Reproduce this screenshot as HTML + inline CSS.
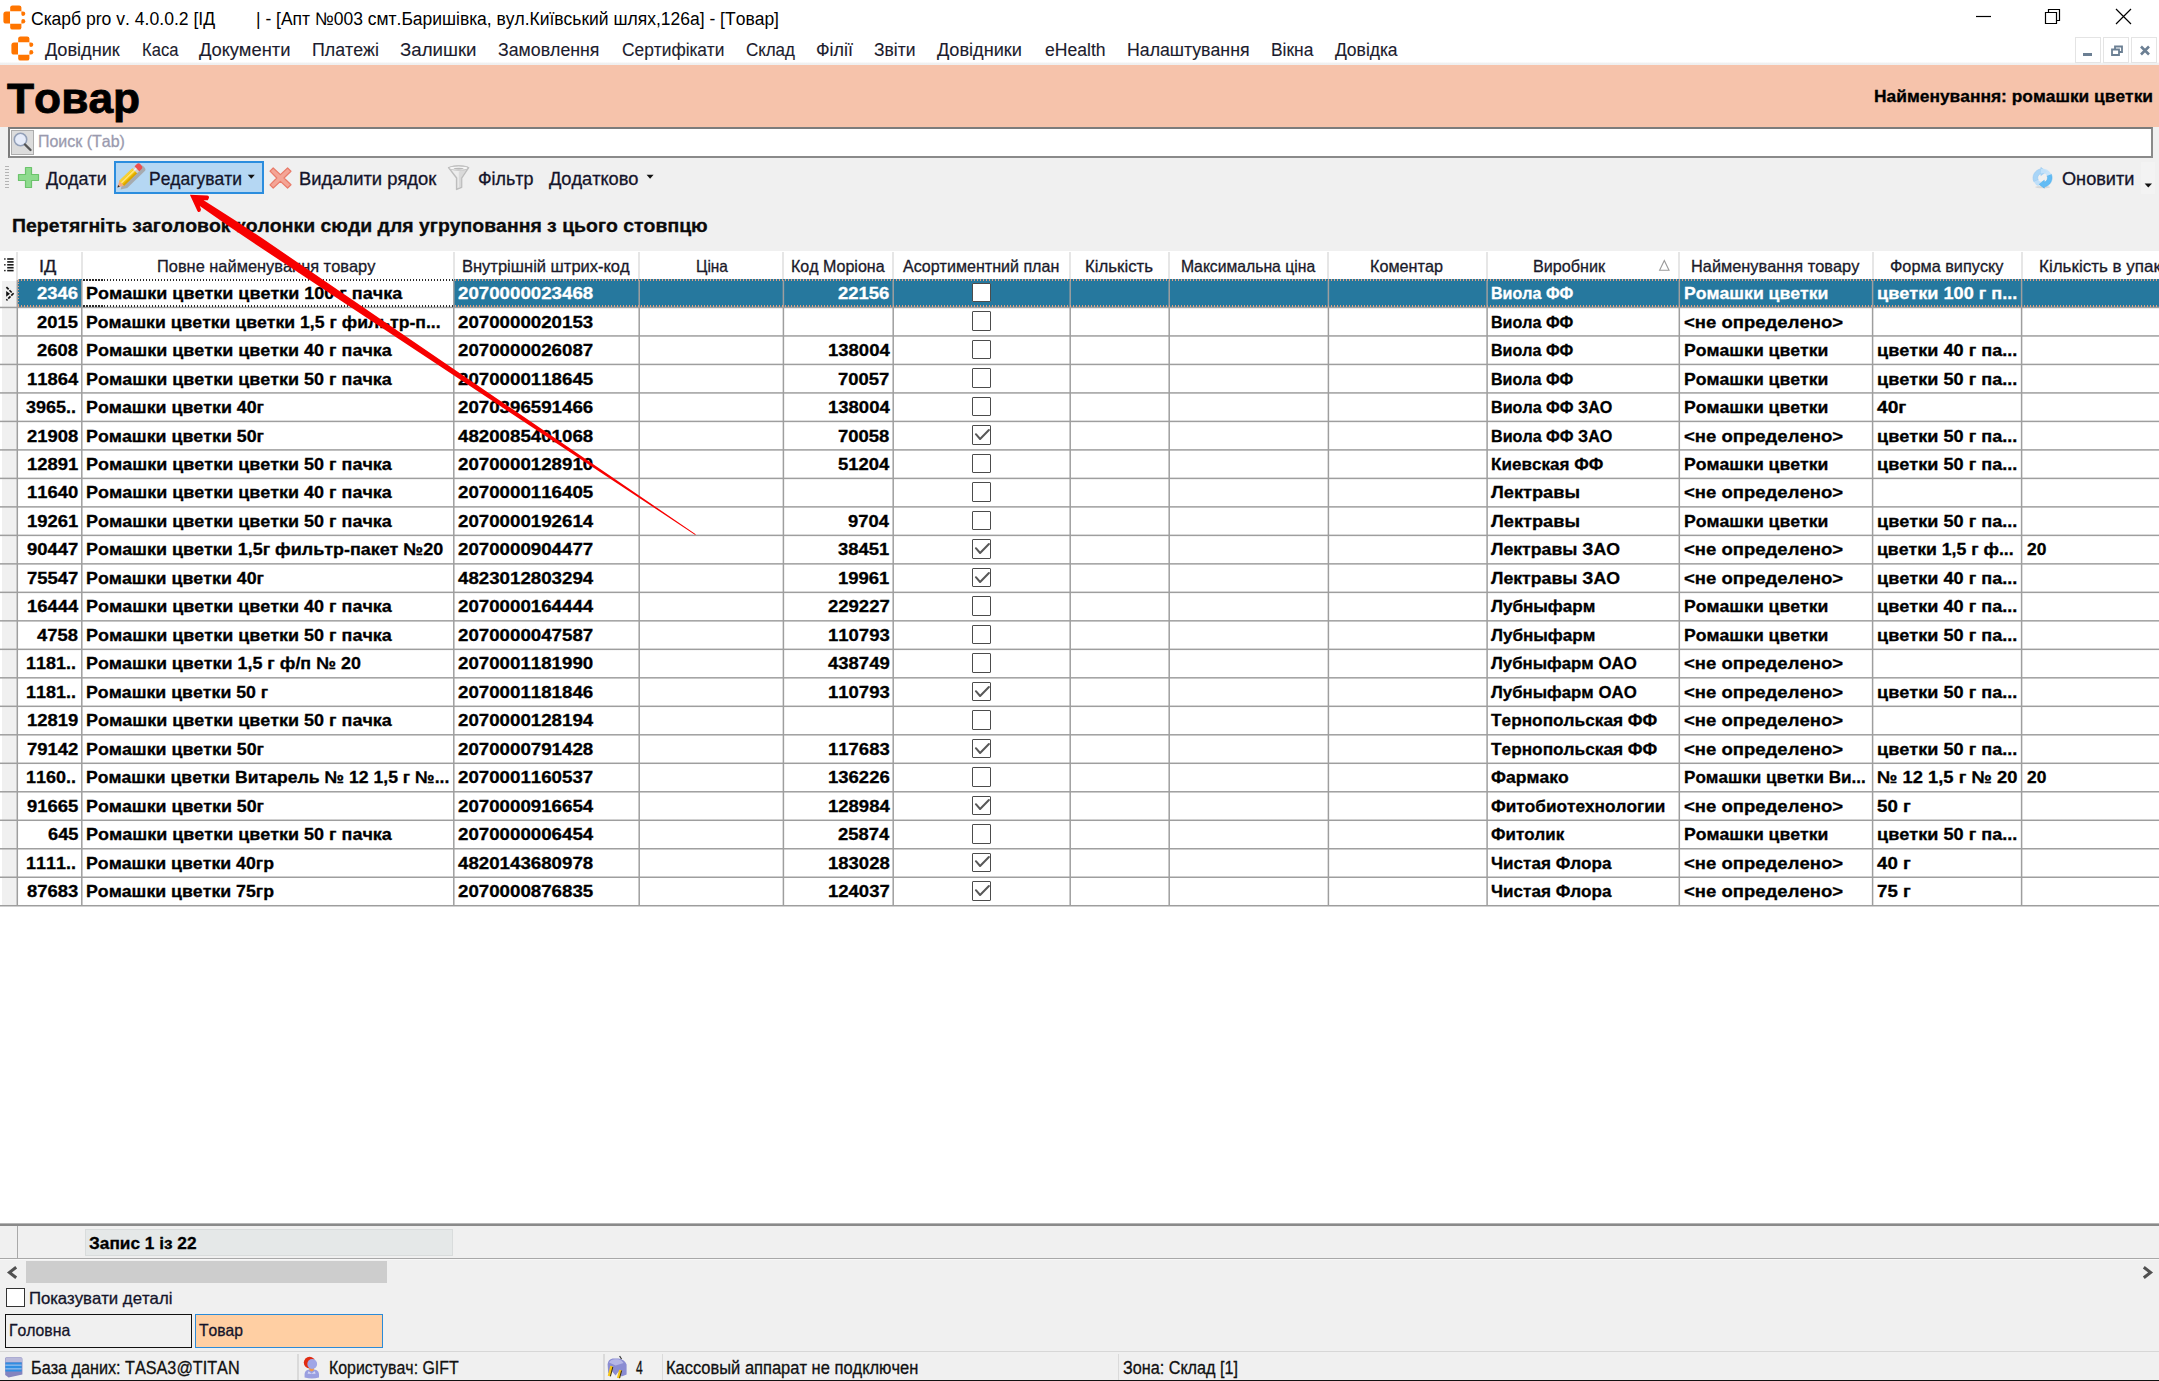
<!DOCTYPE html>
<html><head><meta charset="utf-8"><title>Скарб pro</title>
<style>
html,body{margin:0;padding:0;background:#fff;}
body{width:2159px;height:1381px;position:relative;overflow:hidden;font-family:"Liberation Sans",sans-serif;font-kerning:none;}
.t{position:absolute;white-space:nowrap;line-height:1;letter-spacing:0;-webkit-text-stroke:0.3px currentColor}
.r{position:absolute}
.a{position:absolute;overflow:visible}
</style></head><body>
<div class="r" style="left:0px;top:0px;width:2159px;height:65px;background:#fff;"></div>
<div class="r" style="left:0px;top:61.5px;width:2159px;height:3.5px;background:linear-gradient(#fff,#f0f0f0 40%,#efefef);"></div>
<div class="r" style="left:0px;top:65px;width:2159px;height:62px;background:#F6C3AB;"></div>
<div class="r" style="left:0px;top:127px;width:2159px;height:124px;background:#F0F0F0;"></div>
<div class="r" style="left:0px;top:251px;width:2159px;height:972px;background:#fff;"></div>
<div class="r" style="left:0px;top:1223px;width:2159px;height:158px;background:#F0F0F0;"></div>
<svg class="a" style="left:2.6px;top:4.9px" width="24" height="26" viewBox="0 0 24 26"><path fill="#FF7500" d="M7.2 2.6Q7.2 0.4 9.4 0.4H16.2Q18.4 0.4 18.4 2.6V6.2H7.2Z"/><path fill="#FF7500" d="M0.4 9.2Q0.4 6.6 3 6.6H7V18.6H3Q0.4 18.6 0.4 16Z"/><path fill="#FF7500" d="M7.2 18.8H18.4V22.4Q18.4 24.6 16.2 24.6H9.4Q7.2 24.6 7.2 22.4Z"/><path fill="#FF7500" d="M18.4 6.6H20Q22.3 6.6 22.3 8.8Q22.3 10.9 20 10.9Q18.4 10.9 18.4 9.3Z"/><path fill="#FF7500" d="M18.4 15.7Q18.4 14.1 20 14.1Q22.3 14.1 22.3 16.2Q22.3 18.4 20 18.4H18.4Z"/></svg>
<svg class="a" style="left:11.4px;top:36px" width="24" height="26" viewBox="0 0 24 26"><path fill="#FF7500" d="M7.2 2.6Q7.2 0.4 9.4 0.4H16.2Q18.4 0.4 18.4 2.6V6.2H7.2Z"/><path fill="#FF7500" d="M0.4 9.2Q0.4 6.6 3 6.6H7V18.6H3Q0.4 18.6 0.4 16Z"/><path fill="#FF7500" d="M7.2 18.8H18.4V22.4Q18.4 24.6 16.2 24.6H9.4Q7.2 24.6 7.2 22.4Z"/><path fill="#FF7500" d="M18.4 6.6H20Q22.3 6.6 22.3 8.8Q22.3 10.9 20 10.9Q18.4 10.9 18.4 9.3Z"/><path fill="#FF7500" d="M18.4 15.7Q18.4 14.1 20 14.1Q22.3 14.1 22.3 16.2Q22.3 18.4 20 18.4H18.4Z"/></svg>
<div class="t" style="left:31.30px;top:10px;font-size:18px;font-weight:400;color:#000;transform:scaleX(0.9772);transform-origin:0 0;-webkit-text-stroke:0;">Скарб pro v. 4.0.0.2 [ІД</div>
<div class="t" style="left:256.00px;top:10px;font-size:18px;font-weight:400;color:#000;transform:scaleX(0.9716);transform-origin:0 0;-webkit-text-stroke:0;">| - [Апт №003 смт.Баришівка, вул.Київський шлях,126а] - [Товар]</div>
<svg class="a" style="left:1960px;top:0" width="199" height="34" viewBox="0 0 199 34" fill="none" stroke="#000" stroke-width="1.2"><path d="M16 16.5H31"/><path d="M85.5 12.5H96.5V23.5H85.5Z M88.5 12.5V9.5H99.5V20.5H96.5"/><path d="M156 9L171 24M171 9L156 24"/></svg>
<div class="t" style="left:45.00px;top:42px;font-size:17.5px;font-weight:400;color:#1c1c2e;transform:scaleX(1.0380);transform-origin:0 0;-webkit-text-stroke:0.12px currentColor;">Довідник</div>
<div class="t" style="left:141.50px;top:42px;font-size:17.5px;font-weight:400;color:#1c1c2e;transform:scaleX(0.9478);transform-origin:0 0;-webkit-text-stroke:0.12px currentColor;">Каса</div>
<div class="t" style="left:199.00px;top:42px;font-size:17.5px;font-weight:400;color:#1c1c2e;transform:scaleX(1.0490);transform-origin:0 0;-webkit-text-stroke:0.12px currentColor;">Документи</div>
<div class="t" style="left:312.00px;top:42px;font-size:17.5px;font-weight:400;color:#1c1c2e;transform:scaleX(1.0169);transform-origin:0 0;-webkit-text-stroke:0.12px currentColor;">Платежі</div>
<div class="t" style="left:400.00px;top:42px;font-size:17.5px;font-weight:400;color:#1c1c2e;transform:scaleX(1.0661);transform-origin:0 0;-webkit-text-stroke:0.12px currentColor;">Залишки</div>
<div class="t" style="left:498.00px;top:42px;font-size:17.5px;font-weight:400;color:#1c1c2e;transform:scaleX(1.0133);transform-origin:0 0;-webkit-text-stroke:0.12px currentColor;">Замовлення</div>
<div class="t" style="left:621.50px;top:42px;font-size:17.5px;font-weight:400;color:#1c1c2e;transform:scaleX(0.9916);transform-origin:0 0;-webkit-text-stroke:0.12px currentColor;">Сертифікати</div>
<div class="t" style="left:745.50px;top:42px;font-size:17.5px;font-weight:400;color:#1c1c2e;transform:scaleX(0.9709);transform-origin:0 0;-webkit-text-stroke:0.12px currentColor;">Склад</div>
<div class="t" style="left:816.00px;top:42px;font-size:17.5px;font-weight:400;color:#1c1c2e;transform:scaleX(1.0238);transform-origin:0 0;-webkit-text-stroke:0.12px currentColor;">Філії</div>
<div class="t" style="left:874.00px;top:42px;font-size:17.5px;font-weight:400;color:#1c1c2e;transform:scaleX(0.9985);transform-origin:0 0;-webkit-text-stroke:0.12px currentColor;">Звіти</div>
<div class="t" style="left:937.00px;top:42px;font-size:17.5px;font-weight:400;color:#1c1c2e;transform:scaleX(1.0381);transform-origin:0 0;-webkit-text-stroke:0.12px currentColor;">Довідники</div>
<div class="t" style="left:1044.50px;top:42px;font-size:17.5px;font-weight:400;color:#1c1c2e;transform:scaleX(1.0034);transform-origin:0 0;-webkit-text-stroke:0.12px currentColor;">eHealth</div>
<div class="t" style="left:1126.50px;top:42px;font-size:17.5px;font-weight:400;color:#1c1c2e;transform:scaleX(1.0129);transform-origin:0 0;-webkit-text-stroke:0.12px currentColor;">Налаштування</div>
<div class="t" style="left:1271.00px;top:42px;font-size:17.5px;font-weight:400;color:#1c1c2e;transform:scaleX(0.9951);transform-origin:0 0;-webkit-text-stroke:0.12px currentColor;">Вікна</div>
<div class="t" style="left:1335.00px;top:42px;font-size:17.5px;font-weight:400;color:#1c1c2e;transform:scaleX(1.0012);transform-origin:0 0;-webkit-text-stroke:0.12px currentColor;">Довідка</div>
<div class="r" style="left:2075px;top:37px;width:26px;height:26px;background:#fff;border:1px solid #e4e4e4;box-sizing:border-box"></div>
<div class="r" style="left:2103px;top:37px;width:26px;height:26px;background:#fff;border:1px solid #e4e4e4;box-sizing:border-box"></div>
<div class="r" style="left:2131px;top:37px;width:26px;height:26px;background:#fff;border:1px solid #e4e4e4;box-sizing:border-box"></div>
<svg class="a" style="left:2075px;top:37px" width="84" height="26" viewBox="0 0 84 26" fill="none" stroke="#6b7f93" stroke-width="2"><path d="M8 17.5H17" stroke-width="3"/><path d="M37 12.5H44V18H37Z M40 12V9.5H47V15H44.5" stroke-width="1.8"/><path d="M66 9.5L74 17.5M74 9.5L66 17.5" stroke-width="2.6"/></svg>
<div class="t" style="left:6.50px;top:78px;font-size:42px;font-weight:700;color:#000;transform:scaleX(1.0551);transform-origin:0 0;-webkit-text-stroke:0.8px #000;">Товар</div>
<div class="t" style="left:1873.50px;top:88px;font-size:17px;font-weight:700;color:#000;transform:scaleX(1.0221);transform-origin:0 0;">Найменування: ромашки цветки</div>
<div class="r" style="left:7.5px;top:127px;width:2145px;height:31px;background:#fff;border:2px solid #8a8a8a;border-top-color:#7c7c7c;border-left-color:#7c7c7c;box-sizing:border-box"></div>
<div class="r" style="left:11px;top:130px;width:23px;height:25px;background:#DCDCDC;border:1px solid #ADADAD;box-sizing:border-box"></div>
<svg class="a" style="left:11px;top:130px" width="23" height="25" viewBox="0 0 23 25"><circle cx="9.5" cy="9.5" r="6.2" fill="#E6ECFA" stroke="#93A0B8" stroke-width="1.6"/><path d="M14 14.5L19.5 20" stroke="#555" stroke-width="2.4" stroke-linecap="round"/></svg>
<div class="t" style="left:37.50px;top:133px;font-size:16.5px;font-weight:400;color:#9a9aae;transform:scaleX(0.9677);transform-origin:0 0;">Поиск (Tab)</div>
<div class="r" style="left:4.5px;top:165.5px;width:4.5px;height:1.3px;background:#b4b4b4;"></div>
<div class="r" style="left:4.5px;top:168.6px;width:4.5px;height:1.3px;background:#b4b4b4;"></div>
<div class="r" style="left:4.5px;top:171.7px;width:4.5px;height:1.3px;background:#b4b4b4;"></div>
<div class="r" style="left:4.5px;top:174.8px;width:4.5px;height:1.3px;background:#b4b4b4;"></div>
<div class="r" style="left:4.5px;top:177.9px;width:4.5px;height:1.3px;background:#b4b4b4;"></div>
<div class="r" style="left:4.5px;top:181.0px;width:4.5px;height:1.3px;background:#b4b4b4;"></div>
<div class="r" style="left:4.5px;top:184.1px;width:4.5px;height:1.3px;background:#b4b4b4;"></div>
<div class="r" style="left:4.5px;top:187.2px;width:4.5px;height:1.3px;background:#b4b4b4;"></div>
<svg class="a" style="left:17px;top:166px" width="23" height="23" viewBox="0 0 23 23"><path d="M8.5 1.5H14.5V8.5H21.5V14.5H14.5V21.5H8.5V14.5H1.5V8.5H8.5Z" fill="#8EDB8E" stroke="#6CC36C" stroke-width="1.2" stroke-linejoin="round"/></svg>
<div class="t" style="left:46.30px;top:171px;font-size:17.5px;font-weight:400;color:#14142a;transform:scaleX(1.0238);transform-origin:0 0;">Додати</div>
<div class="r" style="left:114px;top:161px;width:150px;height:33px;background:#B5D7F3;border:2px solid #2B8DDE;box-sizing:border-box"></div>
<svg class="a" style="left:116px;top:163px" width="30" height="30" viewBox="0 0 30 30"><g transform="translate(4.6,26.6) rotate(-43.8)" opacity=".85"><path d="M0 0L6 -3.4H30.3Q32.6 -3.4 32.6 0Q32.6 3.4 30.3 3.4H6Z" fill="#A3A3A3"/></g><g transform="translate(1.4,24.4) rotate(-43.8)"><path d="M0 0L6 -3.4V3.4Z" fill="#F6A97F"/><path d="M0 0L2.2 -1.25V1.25Z" fill="#2b2b2b"/><rect x="6" y="-3.4" width="18.2" height="6.8" fill="#F0BE00"/><rect x="6" y="-3.4" width="18.2" height="1.5" fill="#F7D23A"/><rect x="6" y="-1.5" width="18.2" height="1.9" fill="#FFE373"/><rect x="6" y="1.9" width="18.2" height="1.5" fill="#D9A300"/><rect x="24" y="-3.4" width="3.2" height="6.8" fill="#CFCFCF"/><rect x="24" y="-1.4" width="3.2" height="1.6" fill="#F2F2F2"/><path d="M27 -3.4H30.3Q32.6 -3.4 32.6 0Q32.6 3.4 30.3 3.4H27Z" fill="#EE4E4E"/></g></svg>
<div class="t" style="left:148.70px;top:171px;font-size:17.5px;font-weight:400;color:#14142a;transform:scaleX(0.9962);transform-origin:0 0;">Редагувати</div>
<svg class="a" style="left:247px;top:174px" width="9" height="6"><path d="M0.8 0.8H7.8L4.3 4.8Z" fill="#111"/></svg>
<svg class="a" style="left:268px;top:166px" width="25" height="24" viewBox="0 0 25 24"><path d="M5.2 2L12.4 8.6L19.6 2L23 5.2L16 12L23 18.8L19.6 22L12.4 15.4L5.2 22L2 18.8L8.8 12L2 5.2Z" fill="#F4A596" stroke="#E97B69" stroke-width="1.2" stroke-linejoin="round"/></svg>
<div class="t" style="left:298.50px;top:171px;font-size:17.5px;font-weight:400;color:#14142a;transform:scaleX(1.0495);transform-origin:0 0;">Видалити рядок</div>
<svg class="a" style="left:446px;top:164px" width="25" height="27" viewBox="0 0 25 27"><path d="M2.6 3.6Q12.5 0.4 22.6 3.6L15.6 14V23.2L10.6 25.4V14Z" fill="#EDEDED" stroke="#BDBDBD" stroke-width="1.5" stroke-linejoin="round"/><path d="M12.8 7.5L21 4.8L15.2 13.8V22.8L12.8 24Z" fill="#D4D4D4" opacity=".8"/><ellipse cx="12.6" cy="4" rx="9.4" ry="2.1" fill="#F6F6F6" stroke="#C2C2C2" stroke-width="1.2"/><ellipse cx="12.6" cy="4.6" rx="5" ry="0.8" fill="#B9B9B9"/></svg>
<div class="t" style="left:477.50px;top:171px;font-size:17.5px;font-weight:400;color:#14142a;transform:scaleX(1.0218);transform-origin:0 0;">Фільтр</div>
<div class="t" style="left:549.00px;top:171px;font-size:17.5px;font-weight:400;color:#14142a;transform:scaleX(1.0410);transform-origin:0 0;">Додатково</div>
<svg class="a" style="left:646px;top:174px" width="9" height="6"><path d="M0.6 0.8H7.6L4.1 4.8Z" fill="#111"/></svg>
<svg class="a" style="left:2031.1px;top:165.5px" width="23.4" height="23.4" viewBox="0 0 26 26"><ellipse cx="13" cy="23.4" rx="8.5" ry="1.3" fill="#d9d9d9"/><path d="M3.2 17.5A10.2 10.2 0 0 1 11 3.2V1.6L17.2 6.2L11 10.6V8.4A5 5 0 0 0 8 15.6Z" fill="#A9D5F7" stroke="#8EC6F2" stroke-width=".6"/><path d="M22.6 9.2A10.2 10.2 0 0 1 14.8 23.2V24.6L8.6 20.2L14.8 15.8V18A5 5 0 0 0 17.8 10.8Z" fill="#62BCF5" stroke="#4FAEEB" stroke-width=".6"/><path d="M11 3.2A10.2 10.2 0 0 1 22.6 9.2L17.8 10.8A5 5 0 0 0 11 8.4Z" fill="#C4E2FA" opacity=".9"/><path d="M3.2 17.5A10.2 10.2 0 0 0 8.6 22.6L8.6 20.2L11.5 17.8A5 5 0 0 1 8 15.6Z" fill="#B9DDF9" opacity=".9"/></svg>
<div class="t" style="left:2061.50px;top:171px;font-size:17.5px;font-weight:400;color:#14142a;transform:scaleX(1.0370);transform-origin:0 0;">Оновити</div>
<div class="r" style="left:2141px;top:162px;width:14px;height:31.5px;background:#F3F3F3;"></div>
<svg class="a" style="left:2144px;top:183px" width="9" height="6"><path d="M0.6 0.6H8L4.3 4.6Z" fill="#111"/></svg>
<div class="t" style="left:12.30px;top:217px;font-size:18px;font-weight:700;color:#0a0a0a;transform:scaleX(1.0793);transform-origin:0 0;">Перетягніть заголовок колонки сюди для угруповання з цього стовпцю</div>
<div class="r" style="left:0px;top:251px;width:17.5px;height:29px;background:#fff;"></div>
<div class="r" style="left:16px;top:252px;width:2px;height:28px;background:#E6E6E6;"></div>
<div class="r" style="left:81px;top:252px;width:2px;height:28px;background:#E6E6E6;"></div>
<div class="r" style="left:453px;top:252px;width:2px;height:28px;background:#E6E6E6;"></div>
<div class="r" style="left:638px;top:252px;width:2px;height:28px;background:#E6E6E6;"></div>
<div class="r" style="left:782px;top:252px;width:2px;height:28px;background:#E6E6E6;"></div>
<div class="r" style="left:892px;top:252px;width:2px;height:28px;background:#E6E6E6;"></div>
<div class="r" style="left:1069px;top:252px;width:2px;height:28px;background:#E6E6E6;"></div>
<div class="r" style="left:1168px;top:252px;width:2px;height:28px;background:#E6E6E6;"></div>
<div class="r" style="left:1327px;top:252px;width:2px;height:28px;background:#E6E6E6;"></div>
<div class="r" style="left:1486px;top:252px;width:2px;height:28px;background:#E6E6E6;"></div>
<div class="r" style="left:1678px;top:252px;width:2px;height:28px;background:#E6E6E6;"></div>
<div class="r" style="left:1872px;top:252px;width:2px;height:28px;background:#E6E6E6;"></div>
<div class="r" style="left:2021px;top:252px;width:2px;height:28px;background:#E6E6E6;"></div>
<div class="t" style="left:39.30px;top:258px;font-size:16.5px;font-weight:400;color:#1a1a2a;transform:scaleX(1.1038);transform-origin:0 0;">ІД</div>
<div class="t" style="left:157.30px;top:258px;font-size:16.5px;font-weight:400;color:#1a1a2a;transform:scaleX(0.9933);transform-origin:0 0;">Повне найменування товару</div>
<div class="t" style="left:461.70px;top:258px;font-size:16.5px;font-weight:400;color:#1a1a2a;transform:scaleX(1.0002);transform-origin:0 0;">Внутрішній штрих-код</div>
<div class="t" style="left:695.50px;top:258px;font-size:16.5px;font-weight:400;color:#1a1a2a;transform:scaleX(0.9344);transform-origin:0 0;">Ціна</div>
<div class="t" style="left:791.30px;top:258px;font-size:16.5px;font-weight:400;color:#1a1a2a;transform:scaleX(0.9731);transform-origin:0 0;">Код Моріона</div>
<div class="t" style="left:902.50px;top:258px;font-size:16.5px;font-weight:400;color:#1a1a2a;transform:scaleX(0.9735);transform-origin:0 0;">Асортиментний план</div>
<div class="t" style="left:1085.00px;top:258px;font-size:16.5px;font-weight:400;color:#1a1a2a;transform:scaleX(1.0175);transform-origin:0 0;">Кількість</div>
<div class="t" style="left:1181.00px;top:258px;font-size:16.5px;font-weight:400;color:#1a1a2a;transform:scaleX(0.9544);transform-origin:0 0;">Максимальна ціна</div>
<div class="t" style="left:1370.20px;top:258px;font-size:16.5px;font-weight:400;color:#1a1a2a;transform:scaleX(0.9817);transform-origin:0 0;">Коментар</div>
<div class="t" style="left:1533.40px;top:258px;font-size:16.5px;font-weight:400;color:#1a1a2a;transform:scaleX(0.9800);transform-origin:0 0;">Виробник</div>
<div class="t" style="left:1690.70px;top:258px;font-size:16.5px;font-weight:400;color:#1a1a2a;transform:scaleX(0.9903);transform-origin:0 0;">Найменування товару</div>
<div class="t" style="left:1890.00px;top:258px;font-size:16.5px;font-weight:400;color:#1a1a2a;transform:scaleX(0.9859);transform-origin:0 0;">Форма випуску</div>
<div class="t" style="left:2039.00px;top:258px;font-size:16.5px;font-weight:400;color:#1a1a2a;transform:scaleX(1.0310);transform-origin:0 0;">Кількість в упаковці</div>
<svg class="a" style="left:3px;top:257px" width="12" height="16" viewBox="0 0 12 16" fill="#1a1a1a"><rect x="1.1" y="1.3" width="1.5" height="1.4"/><rect x="4.2" y="1.2" width="6.4" height="1.6"/><rect x="4.2" y="4.1" width="6.4" height="1.6"/><rect x="1.1" y="7.1" width="1.5" height="1.4"/><rect x="4.2" y="7.0" width="6.4" height="1.6"/><rect x="4.2" y="9.9" width="6.4" height="1.6"/><rect x="1.1" y="12.9" width="1.5" height="1.4"/><rect x="4.2" y="12.8" width="6.4" height="1.6"/></svg>
<svg class="a" style="left:1658px;top:259px" width="13" height="13"><path d="M6.3 1.5L11 11.2H1.6Z" fill="none" stroke="#9a9a9a" stroke-width="1.1"/></svg>
<div class="r" style="left:2px;top:281px;width:15px;height:625px;background:#F0F0F0;"></div>
<div class="r" style="left:17.5px;top:279.2px;width:64.5px;height:28px;background:#26789E;"></div>
<div class="r" style="left:453.5px;top:279.2px;width:1720px;height:28px;background:#26789E;"></div>
<div class="r" style="left:0px;top:306px;width:2159px;height:3px;background:linear-gradient(180deg,rgba(158,158,158,0.300) 0px 1px,rgba(158,158,158,1.000) 1px 2px,rgba(158,158,158,0.200) 2px 3px)"></div>
<div class="r" style="left:0px;top:335px;width:2159px;height:2px;background:linear-gradient(180deg,rgba(158,158,158,0.810) 0px 1px,rgba(158,158,158,0.690) 1px 2px)"></div>
<div class="r" style="left:0px;top:363px;width:2159px;height:3px;background:linear-gradient(180deg,rgba(158,158,158,0.320) 0px 1px,rgba(158,158,158,1.000) 1px 2px,rgba(158,158,158,0.180) 2px 3px)"></div>
<div class="r" style="left:0px;top:392px;width:2159px;height:2px;background:linear-gradient(180deg,rgba(158,158,158,0.830) 0px 1px,rgba(158,158,158,0.670) 1px 2px)"></div>
<div class="r" style="left:0px;top:420px;width:2159px;height:3px;background:linear-gradient(180deg,rgba(158,158,158,0.340) 0px 1px,rgba(158,158,158,1.000) 1px 2px,rgba(158,158,158,0.160) 2px 3px)"></div>
<div class="r" style="left:0px;top:449px;width:2159px;height:2px;background:linear-gradient(180deg,rgba(158,158,158,0.850) 0px 1px,rgba(158,158,158,0.650) 1px 2px)"></div>
<div class="r" style="left:0px;top:477px;width:2159px;height:3px;background:linear-gradient(180deg,rgba(158,158,158,0.360) 0px 1px,rgba(158,158,158,1.000) 1px 2px,rgba(158,158,158,0.140) 2px 3px)"></div>
<div class="r" style="left:0px;top:506px;width:2159px;height:2px;background:linear-gradient(180deg,rgba(158,158,158,0.870) 0px 1px,rgba(158,158,158,0.630) 1px 2px)"></div>
<div class="r" style="left:0px;top:534px;width:2159px;height:3px;background:linear-gradient(180deg,rgba(158,158,158,0.380) 0px 1px,rgba(158,158,158,1.000) 1px 2px,rgba(158,158,158,0.120) 2px 3px)"></div>
<div class="r" style="left:0px;top:563px;width:2159px;height:2px;background:linear-gradient(180deg,rgba(158,158,158,0.890) 0px 1px,rgba(158,158,158,0.610) 1px 2px)"></div>
<div class="r" style="left:0px;top:591px;width:2159px;height:3px;background:linear-gradient(180deg,rgba(158,158,158,0.400) 0px 1px,rgba(158,158,158,1.000) 1px 2px,rgba(158,158,158,0.100) 2px 3px)"></div>
<div class="r" style="left:0px;top:620px;width:2159px;height:2px;background:linear-gradient(180deg,rgba(158,158,158,0.910) 0px 1px,rgba(158,158,158,0.590) 1px 2px)"></div>
<div class="r" style="left:0px;top:648px;width:2159px;height:3px;background:linear-gradient(180deg,rgba(158,158,158,0.420) 0px 1px,rgba(158,158,158,1.000) 1px 2px,rgba(158,158,158,0.080) 2px 3px)"></div>
<div class="r" style="left:0px;top:677px;width:2159px;height:2px;background:linear-gradient(180deg,rgba(158,158,158,0.930) 0px 1px,rgba(158,158,158,0.570) 1px 2px)"></div>
<div class="r" style="left:0px;top:705px;width:2159px;height:3px;background:linear-gradient(180deg,rgba(158,158,158,0.440) 0px 1px,rgba(158,158,158,1.000) 1px 2px,rgba(158,158,158,0.060) 2px 3px)"></div>
<div class="r" style="left:0px;top:734px;width:2159px;height:2px;background:linear-gradient(180deg,rgba(158,158,158,0.950) 0px 1px,rgba(158,158,158,0.550) 1px 2px)"></div>
<div class="r" style="left:0px;top:762px;width:2159px;height:3px;background:linear-gradient(180deg,rgba(158,158,158,0.460) 0px 1px,rgba(158,158,158,1.000) 1px 2px,rgba(158,158,158,0.040) 2px 3px)"></div>
<div class="r" style="left:0px;top:791px;width:2159px;height:2px;background:linear-gradient(180deg,rgba(158,158,158,0.970) 0px 1px,rgba(158,158,158,0.530) 1px 2px)"></div>
<div class="r" style="left:0px;top:819px;width:2159px;height:3px;background:linear-gradient(180deg,rgba(158,158,158,0.480) 0px 1px,rgba(158,158,158,1.000) 1px 2px,rgba(158,158,158,0.020) 2px 3px)"></div>
<div class="r" style="left:0px;top:848px;width:2159px;height:2px;background:linear-gradient(180deg,rgba(158,158,158,0.990) 0px 1px,rgba(158,158,158,0.510) 1px 2px)"></div>
<div class="r" style="left:0px;top:876px;width:2159px;height:2px;background:linear-gradient(180deg,rgba(158,158,158,0.500) 0px 1px,rgba(158,158,158,1.000) 1px 2px)"></div>
<div class="r" style="left:0px;top:904px;width:2159px;height:3px;background:linear-gradient(180deg,rgba(158,158,158,0.010) 0px 1px,rgba(158,158,158,1.000) 1px 2px,rgba(158,158,158,0.490) 2px 3px)"></div>
<div class="r" style="left:16px;top:280px;width:3px;height:626px;background:linear-gradient(90deg,rgba(158,158,158,0.450) 0px 1px,rgba(158,158,158,1.000) 1px 2px,rgba(158,158,158,0.050) 2px 3px)"></div>
<div class="r" style="left:81px;top:280px;width:2px;height:626px;background:linear-gradient(90deg,rgba(158,158,158,0.950) 0px 1px,rgba(158,158,158,0.550) 1px 2px)"></div>
<div class="r" style="left:453px;top:280px;width:2px;height:626px;background:linear-gradient(90deg,rgba(158,158,158,0.950) 0px 1px,rgba(158,158,158,0.550) 1px 2px)"></div>
<div class="r" style="left:638px;top:280px;width:2px;height:626px;background:linear-gradient(90deg,rgba(158,158,158,0.550) 0px 1px,rgba(158,158,158,0.950) 1px 2px)"></div>
<div class="r" style="left:782px;top:280px;width:3px;height:626px;background:linear-gradient(90deg,rgba(158,158,158,0.350) 0px 1px,rgba(158,158,158,1.000) 1px 2px,rgba(158,158,158,0.150) 2px 3px)"></div>
<div class="r" style="left:892px;top:280px;width:2px;height:626px;background:linear-gradient(90deg,rgba(158,158,158,0.550) 0px 1px,rgba(158,158,158,0.950) 1px 2px)"></div>
<div class="r" style="left:1069px;top:280px;width:2px;height:626px;background:linear-gradient(90deg,rgba(158,158,158,0.550) 0px 1px,rgba(158,158,158,0.950) 1px 2px)"></div>
<div class="r" style="left:1168px;top:280px;width:2px;height:626px;background:linear-gradient(90deg,rgba(158,158,158,0.550) 0px 1px,rgba(158,158,158,0.950) 1px 2px)"></div>
<div class="r" style="left:1327px;top:280px;width:3px;height:626px;background:linear-gradient(90deg,rgba(158,158,158,0.350) 0px 1px,rgba(158,158,158,1.000) 1px 2px,rgba(158,158,158,0.150) 2px 3px)"></div>
<div class="r" style="left:1486px;top:280px;width:2px;height:626px;background:linear-gradient(90deg,rgba(158,158,158,0.650) 0px 1px,rgba(158,158,158,0.850) 1px 2px)"></div>
<div class="r" style="left:1678px;top:280px;width:3px;height:626px;background:linear-gradient(90deg,rgba(158,158,158,0.450) 0px 1px,rgba(158,158,158,1.000) 1px 2px,rgba(158,158,158,0.050) 2px 3px)"></div>
<div class="r" style="left:1871px;top:280px;width:3px;height:626px;background:linear-gradient(90deg,rgba(158,158,158,0.150) 0px 1px,rgba(158,158,158,1.000) 1px 2px,rgba(158,158,158,0.350) 2px 3px)"></div>
<div class="r" style="left:2020px;top:280px;width:3px;height:626px;background:linear-gradient(90deg,rgba(158,158,158,0.150) 0px 1px,rgba(158,158,158,1.000) 1px 2px,rgba(158,158,158,0.350) 2px 3px)"></div>
<div class="r" style="left:83px;top:279.2px;width:370px;height:1.8px;background:repeating-linear-gradient(90deg,#2a2a2a 0 1.5px,transparent 1.5px 3px)"></div>
<div class="r" style="left:83px;top:305.3px;width:370px;height:1.8px;background:repeating-linear-gradient(90deg,#2a2a2a 0 1.5px,transparent 1.5px 3px)"></div>
<div class="r" style="left:18px;top:279.3px;width:63px;height:1.8px;background:repeating-linear-gradient(90deg,#E6A283 0 1.5px,transparent 1.5px 3px)"></div>
<div class="r" style="left:18px;top:305.3px;width:63px;height:1.8px;background:repeating-linear-gradient(90deg,#E6A283 0 1.5px,transparent 1.5px 3px)"></div>
<div class="r" style="left:17.7px;top:280px;width:1.8px;height:26px;background:repeating-linear-gradient(180deg,#E6A283 0 1.5px,transparent 1.5px 3px)"></div>
<div class="r" style="left:455px;top:279.3px;width:1704px;height:1.8px;background:repeating-linear-gradient(90deg,#E6A283 0 1.5px,transparent 1.5px 3px)"></div>
<div class="r" style="left:455px;top:305.3px;width:1704px;height:1.8px;background:repeating-linear-gradient(90deg,#E6A283 0 1.5px,transparent 1.5px 3px)"></div>
<svg class="a" style="left:4px;top:285px" width="12" height="17"><path d="M2.4 2.2L9 8.8L2.4 15.4" fill="none" stroke="#111" stroke-width="1.7" stroke-dasharray="3.2 1.1"/><path d="M2.2 5.9L6 8.8L2.2 11.7Z" fill="#111"/></svg>
<div class="t" style="left:37.12px;top:285px;font-size:17px;font-weight:700;color:#fff;transform:scaleX(1.0805);transform-origin:0 0;">2346</div>
<div class="t" style="left:86.00px;top:285px;font-size:17px;font-weight:700;color:#000;transform:scaleX(1.0581);transform-origin:0 0;">Ромашки цветки цветки 100 г пачка</div>
<div class="t" style="left:458.30px;top:285px;font-size:17px;font-weight:700;color:#fff;transform:scaleX(1.0999);transform-origin:0 0;">2070000023468</div>
<div class="t" style="left:838.00px;top:285px;font-size:17px;font-weight:700;color:#fff;transform:scaleX(1.0853);transform-origin:0 0;">22156</div>
<div class="r" style="left:971.90px;top:282.86px;width:19.5px;height:19.5px;background:#fff;border:1.7px solid #4c4c4c;box-sizing:border-box;border-radius:1px"></div>
<div class="t" style="left:1491.00px;top:285px;font-size:17px;font-weight:700;color:#fff;transform:scaleX(0.9450);transform-origin:0 0;">Виола ФФ</div>
<div class="t" style="left:1683.50px;top:285px;font-size:17px;font-weight:700;color:#fff;transform:scaleX(1.0368);transform-origin:0 0;">Ромашки цветки</div>
<div class="t" style="left:1877.30px;top:285px;font-size:17px;font-weight:700;color:#fff;transform:scaleX(1.0661);transform-origin:0 0;">цветки 100 г п...</div>
<div class="t" style="left:37.12px;top:314px;font-size:17px;font-weight:700;color:#000;transform:scaleX(1.0805);transform-origin:0 0;">2015</div>
<div class="t" style="left:86.00px;top:314px;font-size:17px;font-weight:700;color:#000;transform:scaleX(1.0374);transform-origin:0 0;">Ромашки цветки цветки 1,5 г фильтр-п...</div>
<div class="t" style="left:458.30px;top:314px;font-size:17px;font-weight:700;color:#000;transform:scaleX(1.0999);transform-origin:0 0;">2070000020153</div>
<div class="r" style="left:971.90px;top:311.35px;width:19.5px;height:19.5px;background:#fff;border:1.7px solid #4c4c4c;box-sizing:border-box;border-radius:1px"></div>
<div class="t" style="left:1491.00px;top:314px;font-size:17px;font-weight:700;color:#000;transform:scaleX(0.9450);transform-origin:0 0;">Виола ФФ</div>
<div class="t" style="left:1683.50px;top:314px;font-size:17px;font-weight:700;color:#000;transform:scaleX(1.0896);transform-origin:0 0;">&lt;не определено&gt;</div>
<div class="t" style="left:37.12px;top:342px;font-size:17px;font-weight:700;color:#000;transform:scaleX(1.0805);transform-origin:0 0;">2608</div>
<div class="t" style="left:86.00px;top:342px;font-size:17px;font-weight:700;color:#000;transform:scaleX(1.0570);transform-origin:0 0;">Ромашки цветки цветки 40 г пачка</div>
<div class="t" style="left:458.30px;top:342px;font-size:17px;font-weight:700;color:#000;transform:scaleX(1.0999);transform-origin:0 0;">2070000026087</div>
<div class="t" style="left:827.58px;top:342px;font-size:17px;font-weight:700;color:#000;transform:scaleX(1.0885);transform-origin:0 0;">138004</div>
<div class="r" style="left:971.90px;top:339.84px;width:19.5px;height:19.5px;background:#fff;border:1.7px solid #4c4c4c;box-sizing:border-box;border-radius:1px"></div>
<div class="t" style="left:1491.00px;top:342px;font-size:17px;font-weight:700;color:#000;transform:scaleX(0.9450);transform-origin:0 0;">Виола ФФ</div>
<div class="t" style="left:1683.50px;top:342px;font-size:17px;font-weight:700;color:#000;transform:scaleX(1.0368);transform-origin:0 0;">Ромашки цветки</div>
<div class="t" style="left:1877.30px;top:342px;font-size:17px;font-weight:700;color:#000;transform:scaleX(1.0661);transform-origin:0 0;">цветки 40 г па...</div>
<div class="t" style="left:26.70px;top:371px;font-size:17px;font-weight:700;color:#000;transform:scaleX(1.0853);transform-origin:0 0;">11864</div>
<div class="t" style="left:86.00px;top:371px;font-size:17px;font-weight:700;color:#000;transform:scaleX(1.0570);transform-origin:0 0;">Ромашки цветки цветки 50 г пачка</div>
<div class="t" style="left:458.30px;top:371px;font-size:17px;font-weight:700;color:#000;transform:scaleX(1.0999);transform-origin:0 0;">2070000118645</div>
<div class="t" style="left:838.00px;top:371px;font-size:17px;font-weight:700;color:#000;transform:scaleX(1.0853);transform-origin:0 0;">70057</div>
<div class="r" style="left:971.90px;top:368.33px;width:19.5px;height:19.5px;background:#fff;border:1.7px solid #4c4c4c;box-sizing:border-box;border-radius:1px"></div>
<div class="t" style="left:1491.00px;top:371px;font-size:17px;font-weight:700;color:#000;transform:scaleX(0.9450);transform-origin:0 0;">Виола ФФ</div>
<div class="t" style="left:1683.50px;top:371px;font-size:17px;font-weight:700;color:#000;transform:scaleX(1.0368);transform-origin:0 0;">Ромашки цветки</div>
<div class="t" style="left:1877.30px;top:371px;font-size:17px;font-weight:700;color:#000;transform:scaleX(1.0661);transform-origin:0 0;">цветки 50 г па...</div>
<div class="t" style="left:26.30px;top:399px;font-size:17px;font-weight:700;color:#000;transform:scaleX(1.0580);transform-origin:0 0;">3965..</div>
<div class="t" style="left:86.00px;top:399px;font-size:17px;font-weight:700;color:#000;transform:scaleX(1.0473);transform-origin:0 0;">Ромашки цветки 40г</div>
<div class="t" style="left:458.30px;top:399px;font-size:17px;font-weight:700;color:#000;transform:scaleX(1.0999);transform-origin:0 0;">2070396591466</div>
<div class="t" style="left:827.58px;top:399px;font-size:17px;font-weight:700;color:#000;transform:scaleX(1.0885);transform-origin:0 0;">138004</div>
<div class="r" style="left:971.90px;top:396.82px;width:19.5px;height:19.5px;background:#fff;border:1.7px solid #4c4c4c;box-sizing:border-box;border-radius:1px"></div>
<div class="t" style="left:1491.00px;top:399px;font-size:17px;font-weight:700;color:#000;transform:scaleX(0.9480);transform-origin:0 0;">Виола ФФ ЗАО</div>
<div class="t" style="left:1683.50px;top:399px;font-size:17px;font-weight:700;color:#000;transform:scaleX(1.0368);transform-origin:0 0;">Ромашки цветки</div>
<div class="t" style="left:1877.30px;top:399px;font-size:17px;font-weight:700;color:#000;transform:scaleX(1.1299);transform-origin:0 0;">40г</div>
<div class="t" style="left:26.70px;top:428px;font-size:17px;font-weight:700;color:#000;transform:scaleX(1.0853);transform-origin:0 0;">21908</div>
<div class="t" style="left:86.00px;top:428px;font-size:17px;font-weight:700;color:#000;transform:scaleX(1.0473);transform-origin:0 0;">Ромашки цветки 50г</div>
<div class="t" style="left:458.30px;top:428px;font-size:17px;font-weight:700;color:#000;transform:scaleX(1.0999);transform-origin:0 0;">4820085401068</div>
<div class="t" style="left:838.00px;top:428px;font-size:17px;font-weight:700;color:#000;transform:scaleX(1.0853);transform-origin:0 0;">70058</div>
<div class="r" style="left:971.90px;top:425.31px;width:19.5px;height:19.5px;background:#fff;border:1.7px solid #4c4c4c;box-sizing:border-box;border-radius:1px"></div>
<svg class="a" style="left:973.60px;top:427.11px" width="17" height="16"><path d="M1.9 7.2L6.1 12L14.9 3" fill="none" stroke="#585858" stroke-width="2" stroke-linejoin="round" stroke-linecap="round"/></svg>
<div class="t" style="left:1491.00px;top:428px;font-size:17px;font-weight:700;color:#000;transform:scaleX(0.9480);transform-origin:0 0;">Виола ФФ ЗАО</div>
<div class="t" style="left:1683.50px;top:428px;font-size:17px;font-weight:700;color:#000;transform:scaleX(1.0896);transform-origin:0 0;">&lt;не определено&gt;</div>
<div class="t" style="left:1877.30px;top:428px;font-size:17px;font-weight:700;color:#000;transform:scaleX(1.0661);transform-origin:0 0;">цветки 50 г па...</div>
<div class="t" style="left:26.70px;top:456px;font-size:17px;font-weight:700;color:#000;transform:scaleX(1.0853);transform-origin:0 0;">12891</div>
<div class="t" style="left:86.00px;top:456px;font-size:17px;font-weight:700;color:#000;transform:scaleX(1.0570);transform-origin:0 0;">Ромашки цветки цветки 50 г пачка</div>
<div class="t" style="left:458.30px;top:456px;font-size:17px;font-weight:700;color:#000;transform:scaleX(1.0999);transform-origin:0 0;">2070000128910</div>
<div class="t" style="left:838.00px;top:456px;font-size:17px;font-weight:700;color:#000;transform:scaleX(1.0853);transform-origin:0 0;">51204</div>
<div class="r" style="left:971.90px;top:453.80px;width:19.5px;height:19.5px;background:#fff;border:1.7px solid #4c4c4c;box-sizing:border-box;border-radius:1px"></div>
<div class="t" style="left:1491.00px;top:456px;font-size:17px;font-weight:700;color:#000;transform:scaleX(1.0042);transform-origin:0 0;">Киевская ФФ</div>
<div class="t" style="left:1683.50px;top:456px;font-size:17px;font-weight:700;color:#000;transform:scaleX(1.0368);transform-origin:0 0;">Ромашки цветки</div>
<div class="t" style="left:1877.30px;top:456px;font-size:17px;font-weight:700;color:#000;transform:scaleX(1.0661);transform-origin:0 0;">цветки 50 г па...</div>
<div class="t" style="left:26.70px;top:484px;font-size:17px;font-weight:700;color:#000;transform:scaleX(1.0853);transform-origin:0 0;">11640</div>
<div class="t" style="left:86.00px;top:484px;font-size:17px;font-weight:700;color:#000;transform:scaleX(1.0570);transform-origin:0 0;">Ромашки цветки цветки 40 г пачка</div>
<div class="t" style="left:458.30px;top:484px;font-size:17px;font-weight:700;color:#000;transform:scaleX(1.0999);transform-origin:0 0;">2070000116405</div>
<div class="r" style="left:971.90px;top:482.29px;width:19.5px;height:19.5px;background:#fff;border:1.7px solid #4c4c4c;box-sizing:border-box;border-radius:1px"></div>
<div class="t" style="left:1491.00px;top:484px;font-size:17px;font-weight:700;color:#000;transform:scaleX(1.0716);transform-origin:0 0;">Лектравы</div>
<div class="t" style="left:1683.50px;top:484px;font-size:17px;font-weight:700;color:#000;transform:scaleX(1.0896);transform-origin:0 0;">&lt;не определено&gt;</div>
<div class="t" style="left:26.70px;top:513px;font-size:17px;font-weight:700;color:#000;transform:scaleX(1.0853);transform-origin:0 0;">19261</div>
<div class="t" style="left:86.00px;top:513px;font-size:17px;font-weight:700;color:#000;transform:scaleX(1.0570);transform-origin:0 0;">Ромашки цветки цветки 50 г пачка</div>
<div class="t" style="left:458.30px;top:513px;font-size:17px;font-weight:700;color:#000;transform:scaleX(1.0999);transform-origin:0 0;">2070000192614</div>
<div class="t" style="left:848.42px;top:513px;font-size:17px;font-weight:700;color:#000;transform:scaleX(1.0805);transform-origin:0 0;">9704</div>
<div class="r" style="left:971.90px;top:510.78px;width:19.5px;height:19.5px;background:#fff;border:1.7px solid #4c4c4c;box-sizing:border-box;border-radius:1px"></div>
<div class="t" style="left:1491.00px;top:513px;font-size:17px;font-weight:700;color:#000;transform:scaleX(1.0716);transform-origin:0 0;">Лектравы</div>
<div class="t" style="left:1683.50px;top:513px;font-size:17px;font-weight:700;color:#000;transform:scaleX(1.0368);transform-origin:0 0;">Ромашки цветки</div>
<div class="t" style="left:1877.30px;top:513px;font-size:17px;font-weight:700;color:#000;transform:scaleX(1.0661);transform-origin:0 0;">цветки 50 г па...</div>
<div class="t" style="left:26.70px;top:541px;font-size:17px;font-weight:700;color:#000;transform:scaleX(1.0853);transform-origin:0 0;">90447</div>
<div class="t" style="left:86.00px;top:541px;font-size:17px;font-weight:700;color:#000;transform:scaleX(1.0541);transform-origin:0 0;">Ромашки цветки 1,5г фильтр-пакет №20</div>
<div class="t" style="left:458.30px;top:541px;font-size:17px;font-weight:700;color:#000;transform:scaleX(1.0999);transform-origin:0 0;">2070000904477</div>
<div class="t" style="left:838.00px;top:541px;font-size:17px;font-weight:700;color:#000;transform:scaleX(1.0853);transform-origin:0 0;">38451</div>
<div class="r" style="left:971.90px;top:539.27px;width:19.5px;height:19.5px;background:#fff;border:1.7px solid #4c4c4c;box-sizing:border-box;border-radius:1px"></div>
<svg class="a" style="left:973.60px;top:541.07px" width="17" height="16"><path d="M1.9 7.2L6.1 12L14.9 3" fill="none" stroke="#585858" stroke-width="2" stroke-linejoin="round" stroke-linecap="round"/></svg>
<div class="t" style="left:1491.00px;top:541px;font-size:17px;font-weight:700;color:#000;transform:scaleX(1.0411);transform-origin:0 0;">Лектравы ЗАО</div>
<div class="t" style="left:1683.50px;top:541px;font-size:17px;font-weight:700;color:#000;transform:scaleX(1.0896);transform-origin:0 0;">&lt;не определено&gt;</div>
<div class="t" style="left:1877.30px;top:541px;font-size:17px;font-weight:700;color:#000;transform:scaleX(1.0386);transform-origin:0 0;">цветки 1,5 г ф...</div>
<div class="t" style="left:2026.70px;top:541px;font-size:17px;font-weight:700;color:#000;transform:scaleX(1.0221);transform-origin:0 0;">20</div>
<div class="t" style="left:26.70px;top:570px;font-size:17px;font-weight:700;color:#000;transform:scaleX(1.0853);transform-origin:0 0;">75547</div>
<div class="t" style="left:86.00px;top:570px;font-size:17px;font-weight:700;color:#000;transform:scaleX(1.0473);transform-origin:0 0;">Ромашки цветки 40г</div>
<div class="t" style="left:458.30px;top:570px;font-size:17px;font-weight:700;color:#000;transform:scaleX(1.0999);transform-origin:0 0;">4823012803294</div>
<div class="t" style="left:838.00px;top:570px;font-size:17px;font-weight:700;color:#000;transform:scaleX(1.0853);transform-origin:0 0;">19961</div>
<div class="r" style="left:971.90px;top:567.76px;width:19.5px;height:19.5px;background:#fff;border:1.7px solid #4c4c4c;box-sizing:border-box;border-radius:1px"></div>
<svg class="a" style="left:973.60px;top:569.56px" width="17" height="16"><path d="M1.9 7.2L6.1 12L14.9 3" fill="none" stroke="#585858" stroke-width="2" stroke-linejoin="round" stroke-linecap="round"/></svg>
<div class="t" style="left:1491.00px;top:570px;font-size:17px;font-weight:700;color:#000;transform:scaleX(1.0411);transform-origin:0 0;">Лектравы ЗАО</div>
<div class="t" style="left:1683.50px;top:570px;font-size:17px;font-weight:700;color:#000;transform:scaleX(1.0896);transform-origin:0 0;">&lt;не определено&gt;</div>
<div class="t" style="left:1877.30px;top:570px;font-size:17px;font-weight:700;color:#000;transform:scaleX(1.0661);transform-origin:0 0;">цветки 40 г па...</div>
<div class="t" style="left:26.70px;top:598px;font-size:17px;font-weight:700;color:#000;transform:scaleX(1.0853);transform-origin:0 0;">16444</div>
<div class="t" style="left:86.00px;top:598px;font-size:17px;font-weight:700;color:#000;transform:scaleX(1.0570);transform-origin:0 0;">Ромашки цветки цветки 40 г пачка</div>
<div class="t" style="left:458.30px;top:598px;font-size:17px;font-weight:700;color:#000;transform:scaleX(1.0999);transform-origin:0 0;">2070000164444</div>
<div class="t" style="left:827.58px;top:598px;font-size:17px;font-weight:700;color:#000;transform:scaleX(1.0885);transform-origin:0 0;">229227</div>
<div class="r" style="left:971.90px;top:596.25px;width:19.5px;height:19.5px;background:#fff;border:1.7px solid #4c4c4c;box-sizing:border-box;border-radius:1px"></div>
<div class="t" style="left:1491.00px;top:598px;font-size:17px;font-weight:700;color:#000;transform:scaleX(1.0035);transform-origin:0 0;">Лубныфарм</div>
<div class="t" style="left:1683.50px;top:598px;font-size:17px;font-weight:700;color:#000;transform:scaleX(1.0368);transform-origin:0 0;">Ромашки цветки</div>
<div class="t" style="left:1877.30px;top:598px;font-size:17px;font-weight:700;color:#000;transform:scaleX(1.0661);transform-origin:0 0;">цветки 40 г па...</div>
<div class="t" style="left:37.12px;top:627px;font-size:17px;font-weight:700;color:#000;transform:scaleX(1.0805);transform-origin:0 0;">4758</div>
<div class="t" style="left:86.00px;top:627px;font-size:17px;font-weight:700;color:#000;transform:scaleX(1.0570);transform-origin:0 0;">Ромашки цветки цветки 50 г пачка</div>
<div class="t" style="left:458.30px;top:627px;font-size:17px;font-weight:700;color:#000;transform:scaleX(1.0999);transform-origin:0 0;">2070000047587</div>
<div class="t" style="left:827.58px;top:627px;font-size:17px;font-weight:700;color:#000;transform:scaleX(1.0885);transform-origin:0 0;">110793</div>
<div class="r" style="left:971.90px;top:624.74px;width:19.5px;height:19.5px;background:#fff;border:1.7px solid #4c4c4c;box-sizing:border-box;border-radius:1px"></div>
<div class="t" style="left:1491.00px;top:627px;font-size:17px;font-weight:700;color:#000;transform:scaleX(1.0035);transform-origin:0 0;">Лубныфарм</div>
<div class="t" style="left:1683.50px;top:627px;font-size:17px;font-weight:700;color:#000;transform:scaleX(1.0368);transform-origin:0 0;">Ромашки цветки</div>
<div class="t" style="left:1877.30px;top:627px;font-size:17px;font-weight:700;color:#000;transform:scaleX(1.0661);transform-origin:0 0;">цветки 50 г па...</div>
<div class="t" style="left:26.30px;top:655px;font-size:17px;font-weight:700;color:#000;transform:scaleX(1.0579);transform-origin:0 0;">1181..</div>
<div class="t" style="left:86.00px;top:655px;font-size:17px;font-weight:700;color:#000;transform:scaleX(1.0522);transform-origin:0 0;">Ромашки цветки 1,5 г ф/п № 20</div>
<div class="t" style="left:458.30px;top:655px;font-size:17px;font-weight:700;color:#000;transform:scaleX(1.0999);transform-origin:0 0;">2070001181990</div>
<div class="t" style="left:827.58px;top:655px;font-size:17px;font-weight:700;color:#000;transform:scaleX(1.0885);transform-origin:0 0;">438749</div>
<div class="r" style="left:971.90px;top:653.23px;width:19.5px;height:19.5px;background:#fff;border:1.7px solid #4c4c4c;box-sizing:border-box;border-radius:1px"></div>
<div class="t" style="left:1491.00px;top:655px;font-size:17px;font-weight:700;color:#000;transform:scaleX(0.9884);transform-origin:0 0;">Лубныфарм ОАО</div>
<div class="t" style="left:1683.50px;top:655px;font-size:17px;font-weight:700;color:#000;transform:scaleX(1.0896);transform-origin:0 0;">&lt;не определено&gt;</div>
<div class="t" style="left:26.30px;top:684px;font-size:17px;font-weight:700;color:#000;transform:scaleX(1.0579);transform-origin:0 0;">1181..</div>
<div class="t" style="left:86.00px;top:684px;font-size:17px;font-weight:700;color:#000;transform:scaleX(1.0434);transform-origin:0 0;">Ромашки цветки 50 г</div>
<div class="t" style="left:458.30px;top:684px;font-size:17px;font-weight:700;color:#000;transform:scaleX(1.0999);transform-origin:0 0;">2070001181846</div>
<div class="t" style="left:827.58px;top:684px;font-size:17px;font-weight:700;color:#000;transform:scaleX(1.0885);transform-origin:0 0;">110793</div>
<div class="r" style="left:971.90px;top:681.72px;width:19.5px;height:19.5px;background:#fff;border:1.7px solid #4c4c4c;box-sizing:border-box;border-radius:1px"></div>
<svg class="a" style="left:973.60px;top:683.52px" width="17" height="16"><path d="M1.9 7.2L6.1 12L14.9 3" fill="none" stroke="#585858" stroke-width="2" stroke-linejoin="round" stroke-linecap="round"/></svg>
<div class="t" style="left:1491.00px;top:684px;font-size:17px;font-weight:700;color:#000;transform:scaleX(0.9884);transform-origin:0 0;">Лубныфарм ОАО</div>
<div class="t" style="left:1683.50px;top:684px;font-size:17px;font-weight:700;color:#000;transform:scaleX(1.0896);transform-origin:0 0;">&lt;не определено&gt;</div>
<div class="t" style="left:1877.30px;top:684px;font-size:17px;font-weight:700;color:#000;transform:scaleX(1.0661);transform-origin:0 0;">цветки 50 г па...</div>
<div class="t" style="left:26.70px;top:712px;font-size:17px;font-weight:700;color:#000;transform:scaleX(1.0853);transform-origin:0 0;">12819</div>
<div class="t" style="left:86.00px;top:712px;font-size:17px;font-weight:700;color:#000;transform:scaleX(1.0570);transform-origin:0 0;">Ромашки цветки цветки 50 г пачка</div>
<div class="t" style="left:458.30px;top:712px;font-size:17px;font-weight:700;color:#000;transform:scaleX(1.0999);transform-origin:0 0;">2070000128194</div>
<div class="r" style="left:971.90px;top:710.21px;width:19.5px;height:19.5px;background:#fff;border:1.7px solid #4c4c4c;box-sizing:border-box;border-radius:1px"></div>
<div class="t" style="left:1491.00px;top:712px;font-size:17px;font-weight:700;color:#000;transform:scaleX(1.0150);transform-origin:0 0;">Тернопольская ФФ</div>
<div class="t" style="left:1683.50px;top:712px;font-size:17px;font-weight:700;color:#000;transform:scaleX(1.0896);transform-origin:0 0;">&lt;не определено&gt;</div>
<div class="t" style="left:26.70px;top:741px;font-size:17px;font-weight:700;color:#000;transform:scaleX(1.0853);transform-origin:0 0;">79142</div>
<div class="t" style="left:86.00px;top:741px;font-size:17px;font-weight:700;color:#000;transform:scaleX(1.0473);transform-origin:0 0;">Ромашки цветки 50г</div>
<div class="t" style="left:458.30px;top:741px;font-size:17px;font-weight:700;color:#000;transform:scaleX(1.0999);transform-origin:0 0;">2070000791428</div>
<div class="t" style="left:827.58px;top:741px;font-size:17px;font-weight:700;color:#000;transform:scaleX(1.0885);transform-origin:0 0;">117683</div>
<div class="r" style="left:971.90px;top:738.70px;width:19.5px;height:19.5px;background:#fff;border:1.7px solid #4c4c4c;box-sizing:border-box;border-radius:1px"></div>
<svg class="a" style="left:973.60px;top:740.50px" width="17" height="16"><path d="M1.9 7.2L6.1 12L14.9 3" fill="none" stroke="#585858" stroke-width="2" stroke-linejoin="round" stroke-linecap="round"/></svg>
<div class="t" style="left:1491.00px;top:741px;font-size:17px;font-weight:700;color:#000;transform:scaleX(1.0150);transform-origin:0 0;">Тернопольская ФФ</div>
<div class="t" style="left:1683.50px;top:741px;font-size:17px;font-weight:700;color:#000;transform:scaleX(1.0896);transform-origin:0 0;">&lt;не определено&gt;</div>
<div class="t" style="left:1877.30px;top:741px;font-size:17px;font-weight:700;color:#000;transform:scaleX(1.0661);transform-origin:0 0;">цветки 50 г па...</div>
<div class="t" style="left:26.30px;top:769px;font-size:17px;font-weight:700;color:#000;transform:scaleX(1.0579);transform-origin:0 0;">1160..</div>
<div class="t" style="left:86.00px;top:769px;font-size:17px;font-weight:700;color:#000;transform:scaleX(1.0355);transform-origin:0 0;">Ромашки цветки Витарель № 12 1,5 г №...</div>
<div class="t" style="left:458.30px;top:769px;font-size:17px;font-weight:700;color:#000;transform:scaleX(1.0999);transform-origin:0 0;">2070001160537</div>
<div class="t" style="left:827.58px;top:769px;font-size:17px;font-weight:700;color:#000;transform:scaleX(1.0885);transform-origin:0 0;">136226</div>
<div class="r" style="left:971.90px;top:767.19px;width:19.5px;height:19.5px;background:#fff;border:1.7px solid #4c4c4c;box-sizing:border-box;border-radius:1px"></div>
<div class="t" style="left:1491.00px;top:769px;font-size:17px;font-weight:700;color:#000;transform:scaleX(1.0317);transform-origin:0 0;">Фармако</div>
<div class="t" style="left:1683.50px;top:769px;font-size:17px;font-weight:700;color:#000;transform:scaleX(1.0047);transform-origin:0 0;">Ромашки цветки Ви...</div>
<div class="t" style="left:1877.30px;top:769px;font-size:17px;font-weight:700;color:#000;transform:scaleX(1.0795);transform-origin:0 0;">№ 12 1,5 г № 20</div>
<div class="t" style="left:2026.70px;top:769px;font-size:17px;font-weight:700;color:#000;transform:scaleX(1.0221);transform-origin:0 0;">20</div>
<div class="t" style="left:26.70px;top:798px;font-size:17px;font-weight:700;color:#000;transform:scaleX(1.0853);transform-origin:0 0;">91665</div>
<div class="t" style="left:86.00px;top:798px;font-size:17px;font-weight:700;color:#000;transform:scaleX(1.0473);transform-origin:0 0;">Ромашки цветки 50г</div>
<div class="t" style="left:458.30px;top:798px;font-size:17px;font-weight:700;color:#000;transform:scaleX(1.0999);transform-origin:0 0;">2070000916654</div>
<div class="t" style="left:827.58px;top:798px;font-size:17px;font-weight:700;color:#000;transform:scaleX(1.0885);transform-origin:0 0;">128984</div>
<div class="r" style="left:971.90px;top:795.68px;width:19.5px;height:19.5px;background:#fff;border:1.7px solid #4c4c4c;box-sizing:border-box;border-radius:1px"></div>
<svg class="a" style="left:973.60px;top:797.48px" width="17" height="16"><path d="M1.9 7.2L6.1 12L14.9 3" fill="none" stroke="#585858" stroke-width="2" stroke-linejoin="round" stroke-linecap="round"/></svg>
<div class="t" style="left:1491.00px;top:798px;font-size:17px;font-weight:700;color:#000;transform:scaleX(1.0132);transform-origin:0 0;">Фитобиотехнологии</div>
<div class="t" style="left:1683.50px;top:798px;font-size:17px;font-weight:700;color:#000;transform:scaleX(1.0896);transform-origin:0 0;">&lt;не определено&gt;</div>
<div class="t" style="left:1877.30px;top:798px;font-size:17px;font-weight:700;color:#000;transform:scaleX(1.0980);transform-origin:0 0;">50 г</div>
<div class="t" style="left:47.54px;top:826px;font-size:17px;font-weight:700;color:#000;transform:scaleX(1.0725);transform-origin:0 0;">645</div>
<div class="t" style="left:86.00px;top:826px;font-size:17px;font-weight:700;color:#000;transform:scaleX(1.0570);transform-origin:0 0;">Ромашки цветки цветки 50 г пачка</div>
<div class="t" style="left:458.30px;top:826px;font-size:17px;font-weight:700;color:#000;transform:scaleX(1.0999);transform-origin:0 0;">2070000006454</div>
<div class="t" style="left:838.00px;top:826px;font-size:17px;font-weight:700;color:#000;transform:scaleX(1.0853);transform-origin:0 0;">25874</div>
<div class="r" style="left:971.90px;top:824.17px;width:19.5px;height:19.5px;background:#fff;border:1.7px solid #4c4c4c;box-sizing:border-box;border-radius:1px"></div>
<div class="t" style="left:1491.00px;top:826px;font-size:17px;font-weight:700;color:#000;transform:scaleX(0.9973);transform-origin:0 0;">Фитолик</div>
<div class="t" style="left:1683.50px;top:826px;font-size:17px;font-weight:700;color:#000;transform:scaleX(1.0368);transform-origin:0 0;">Ромашки цветки</div>
<div class="t" style="left:1877.30px;top:826px;font-size:17px;font-weight:700;color:#000;transform:scaleX(1.0661);transform-origin:0 0;">цветки 50 г па...</div>
<div class="t" style="left:26.30px;top:855px;font-size:17px;font-weight:700;color:#000;transform:scaleX(1.0578);transform-origin:0 0;">1111..</div>
<div class="t" style="left:86.00px;top:855px;font-size:17px;font-weight:700;color:#000;transform:scaleX(1.0425);transform-origin:0 0;">Ромашки цветки 40гр</div>
<div class="t" style="left:458.30px;top:855px;font-size:17px;font-weight:700;color:#000;transform:scaleX(1.0999);transform-origin:0 0;">4820143680978</div>
<div class="t" style="left:827.58px;top:855px;font-size:17px;font-weight:700;color:#000;transform:scaleX(1.0885);transform-origin:0 0;">183028</div>
<div class="r" style="left:971.90px;top:852.66px;width:19.5px;height:19.5px;background:#fff;border:1.7px solid #4c4c4c;box-sizing:border-box;border-radius:1px"></div>
<svg class="a" style="left:973.60px;top:854.46px" width="17" height="16"><path d="M1.9 7.2L6.1 12L14.9 3" fill="none" stroke="#585858" stroke-width="2" stroke-linejoin="round" stroke-linecap="round"/></svg>
<div class="t" style="left:1491.00px;top:855px;font-size:17px;font-weight:700;color:#000;transform:scaleX(1.0059);transform-origin:0 0;">Чистая Флора</div>
<div class="t" style="left:1683.50px;top:855px;font-size:17px;font-weight:700;color:#000;transform:scaleX(1.0896);transform-origin:0 0;">&lt;не определено&gt;</div>
<div class="t" style="left:1877.30px;top:855px;font-size:17px;font-weight:700;color:#000;transform:scaleX(1.0980);transform-origin:0 0;">40 г</div>
<div class="t" style="left:26.70px;top:883px;font-size:17px;font-weight:700;color:#000;transform:scaleX(1.0853);transform-origin:0 0;">87683</div>
<div class="t" style="left:86.00px;top:883px;font-size:17px;font-weight:700;color:#000;transform:scaleX(1.0425);transform-origin:0 0;">Ромашки цветки 75гр</div>
<div class="t" style="left:458.30px;top:883px;font-size:17px;font-weight:700;color:#000;transform:scaleX(1.0999);transform-origin:0 0;">2070000876835</div>
<div class="t" style="left:827.58px;top:883px;font-size:17px;font-weight:700;color:#000;transform:scaleX(1.0885);transform-origin:0 0;">124037</div>
<div class="r" style="left:971.90px;top:881.15px;width:19.5px;height:19.5px;background:#fff;border:1.7px solid #4c4c4c;box-sizing:border-box;border-radius:1px"></div>
<svg class="a" style="left:973.60px;top:882.95px" width="17" height="16"><path d="M1.9 7.2L6.1 12L14.9 3" fill="none" stroke="#585858" stroke-width="2" stroke-linejoin="round" stroke-linecap="round"/></svg>
<div class="t" style="left:1491.00px;top:883px;font-size:17px;font-weight:700;color:#000;transform:scaleX(1.0059);transform-origin:0 0;">Чистая Флора</div>
<div class="t" style="left:1683.50px;top:883px;font-size:17px;font-weight:700;color:#000;transform:scaleX(1.0896);transform-origin:0 0;">&lt;не определено&gt;</div>
<div class="t" style="left:1877.30px;top:883px;font-size:17px;font-weight:700;color:#000;transform:scaleX(1.0980);transform-origin:0 0;">75 г</div>
<svg class="a" style="left:0;top:0" width="2159" height="1381" viewBox="0 0 2159 1381"><path d="M189.9 194.7L207.2 195.6Q209.6 196.1 208.8 198.3L207.8 200.2L203.6 200.2L233.8 219.4L263 238.8L695.7 534.2L695.2 534.9L258.2 246L229.2 226.4L199.8 206.1L201 209.6Q200.6 212.6 198.2 212L197.4 211Z" fill="#F70000"/></svg>
<div class="r" style="left:0px;top:1223px;width:2159px;height:3px;background:#8a8a8a;"></div>
<div class="r" style="left:0px;top:1223px;width:2159px;height:1px;background:#b5b5b5;"></div>
<div class="r" style="left:16.5px;top:1226px;width:1.5px;height:32px;background:#a9a9a9;"></div>
<div class="r" style="left:84.5px;top:1228.5px;width:368px;height:27.5px;background:#E5E8E8;border:1px solid #d9dcdc;box-sizing:border-box"></div>
<div class="t" style="left:88.50px;top:1235px;font-size:17px;font-weight:700;color:#000;transform:scaleX(1.0142);transform-origin:0 0;">Запис 1 із 22</div>
<div class="r" style="left:0px;top:1257.5px;width:2159px;height:1.5px;background:#a8a8a8;"></div>
<div class="r" style="left:0px;top:1259px;width:2159px;height:1px;background:#f8f8f8;"></div>
<div class="r" style="left:25.5px;top:1261px;width:361.5px;height:21.8px;background:#CDCDCD;"></div>
<svg class="a" style="left:6px;top:1265px" width="12" height="15"><path d="M10.2 2.2L3.4 7.5L10.2 12.8" fill="none" stroke="#505050" stroke-width="3"/></svg>
<svg class="a" style="left:2142px;top:1265px" width="12" height="15"><path d="M1.8 2.2L8.6 7.5L1.8 12.8" fill="none" stroke="#505050" stroke-width="3"/></svg>
<div class="r" style="left:6px;top:1288px;width:19.3px;height:19.3px;background:#fff;border:1.5px solid #333;box-sizing:border-box"></div>
<div class="t" style="left:29.30px;top:1290px;font-size:16.5px;font-weight:400;color:#14142a;transform:scaleX(1.0143);transform-origin:0 0;">Показувати деталі</div>
<div class="r" style="left:4.5px;top:1314px;width:187.5px;height:33.5px;background:#F0F0F0;border:1.5px solid #111;box-sizing:border-box"></div>
<div class="t" style="left:9.30px;top:1322px;font-size:16.5px;font-weight:400;color:#14142a;transform:scaleX(0.9582);transform-origin:0 0;">Головна</div>
<div class="r" style="left:195px;top:1314px;width:187.5px;height:33.5px;background:#FFCFA3;border:1.5px solid #2B8BD8;box-sizing:border-box"></div>
<div class="t" style="left:199.30px;top:1322px;font-size:16.5px;font-weight:400;color:#14142a;transform:scaleX(0.9492);transform-origin:0 0;">Товар</div>
<div class="r" style="left:0px;top:1351px;width:2159px;height:1.3px;background:#D7D7D7;"></div>
<div class="r" style="left:297px;top:1354px;width:1.5px;height:26px;background:#dadada;"></div>
<div class="r" style="left:603px;top:1354px;width:1.5px;height:26px;background:#dadada;"></div>
<div class="r" style="left:661.5px;top:1354px;width:1.5px;height:26px;background:#dadada;"></div>
<div class="r" style="left:1117.5px;top:1354px;width:1.5px;height:26px;background:#dadada;"></div>
<div class="t" style="left:30.70px;top:1359px;font-size:18px;font-weight:400;color:#111;transform:scaleX(0.8995);transform-origin:0 0;">База даних: TASA3@TITAN</div>
<div class="t" style="left:329.00px;top:1359px;font-size:18px;font-weight:400;color:#111;transform:scaleX(0.8838);transform-origin:0 0;">Користувач: GIFT</div>
<div class="t" style="left:636.00px;top:1359px;font-size:18px;font-weight:400;color:#111;transform:scaleX(0.6704);transform-origin:0 0;">4</div>
<div class="t" style="left:666.00px;top:1359px;font-size:18px;font-weight:400;color:#111;transform:scaleX(0.9165);transform-origin:0 0;">Кассовый аппарат не подключен</div>
<div class="t" style="left:1123.30px;top:1359px;font-size:18px;font-weight:400;color:#111;transform:scaleX(0.8999);transform-origin:0 0;">Зона: Склад [1]</div>
<svg class="a" style="left:4px;top:1356px" width="20" height="23" viewBox="0 0 20 23"><path d="M1.2 2.6Q1.2 1.2 2.8 1.2H16.6Q18.4 1.2 18.4 2.8V18.4L4.6 21.6L1.2 19Z" fill="#8484BE"/><path d="M1.6 2.4Q1.6 1.4 2.8 1.4H16.6Q18 1.4 18 2.6V6.2H1.6Z" fill="#B9B9DA"/><path d="M1.4 6.6H17.6V8.6H1.4ZM1.4 10H17.6V12H1.4ZM1.4 13.4H17.6V15.4H1.4Z" fill="#2F8FE3"/><path d="M1.4 8.6H17.6V10H1.4ZM1.4 12H17.6V13.4H1.4Z" fill="#7DB6EE"/></svg>
<svg class="a" style="left:303px;top:1355px" width="18" height="24" viewBox="0 0 18 24"><circle cx="6.6" cy="7.6" r="5.8" fill="#E12C12"/><path d="M1.6 22.6Q0.6 15.2 6 14.6H11.4Q17 15.2 16 22.6Q9 24.4 1.6 22.6Z" fill="#9A9FE0"/><path d="M5.8 12.6H11.4L10.6 15.4L8.6 16.6L6.6 15.4Z" fill="#F09A4A"/><circle cx="9.2" cy="9" r="4.9" fill="#9FA6E6"/><path d="M5.4 16.2L8.6 18.4L11.8 16.2L12.6 18.8H4.6Z" fill="#D5D8F6"/></svg>
<svg class="a" style="left:606px;top:1355px" width="23" height="24" viewBox="0 0 23 24"><path d="M13.6 1L15.6 4.2" stroke="#333" stroke-width="1.2" fill="none"/><path d="M1.6 9.2Q2.2 4.2 6.6 3.4H12.6Q18.6 4.4 20.6 9.4V19.6L15.6 21.6L12.6 16.4L9.6 20.6L5.2 15.6L2.2 18.6Z" fill="#8A8CD2"/><path d="M3 7.4Q5 4.2 9 4.2H12.4Q16 5 17.6 8L9.6 10.4Z" fill="#B4B6E6"/><path d="M5.6 11.2L3 21" stroke="#F5C518" stroke-width="2.6"/><path d="M6.8 12L4.4 21.4" stroke="#3a2a00" stroke-width="1"/><path d="M14.4 15L12.2 23" stroke="#F5C518" stroke-width="2.6"/><path d="M15.6 15.6L13.6 23.2" stroke="#3a2a00" stroke-width="1"/></svg>
<div class="r" style="left:0px;top:1380px;width:2159px;height:1px;background:#111;"></div>
</body></html>
